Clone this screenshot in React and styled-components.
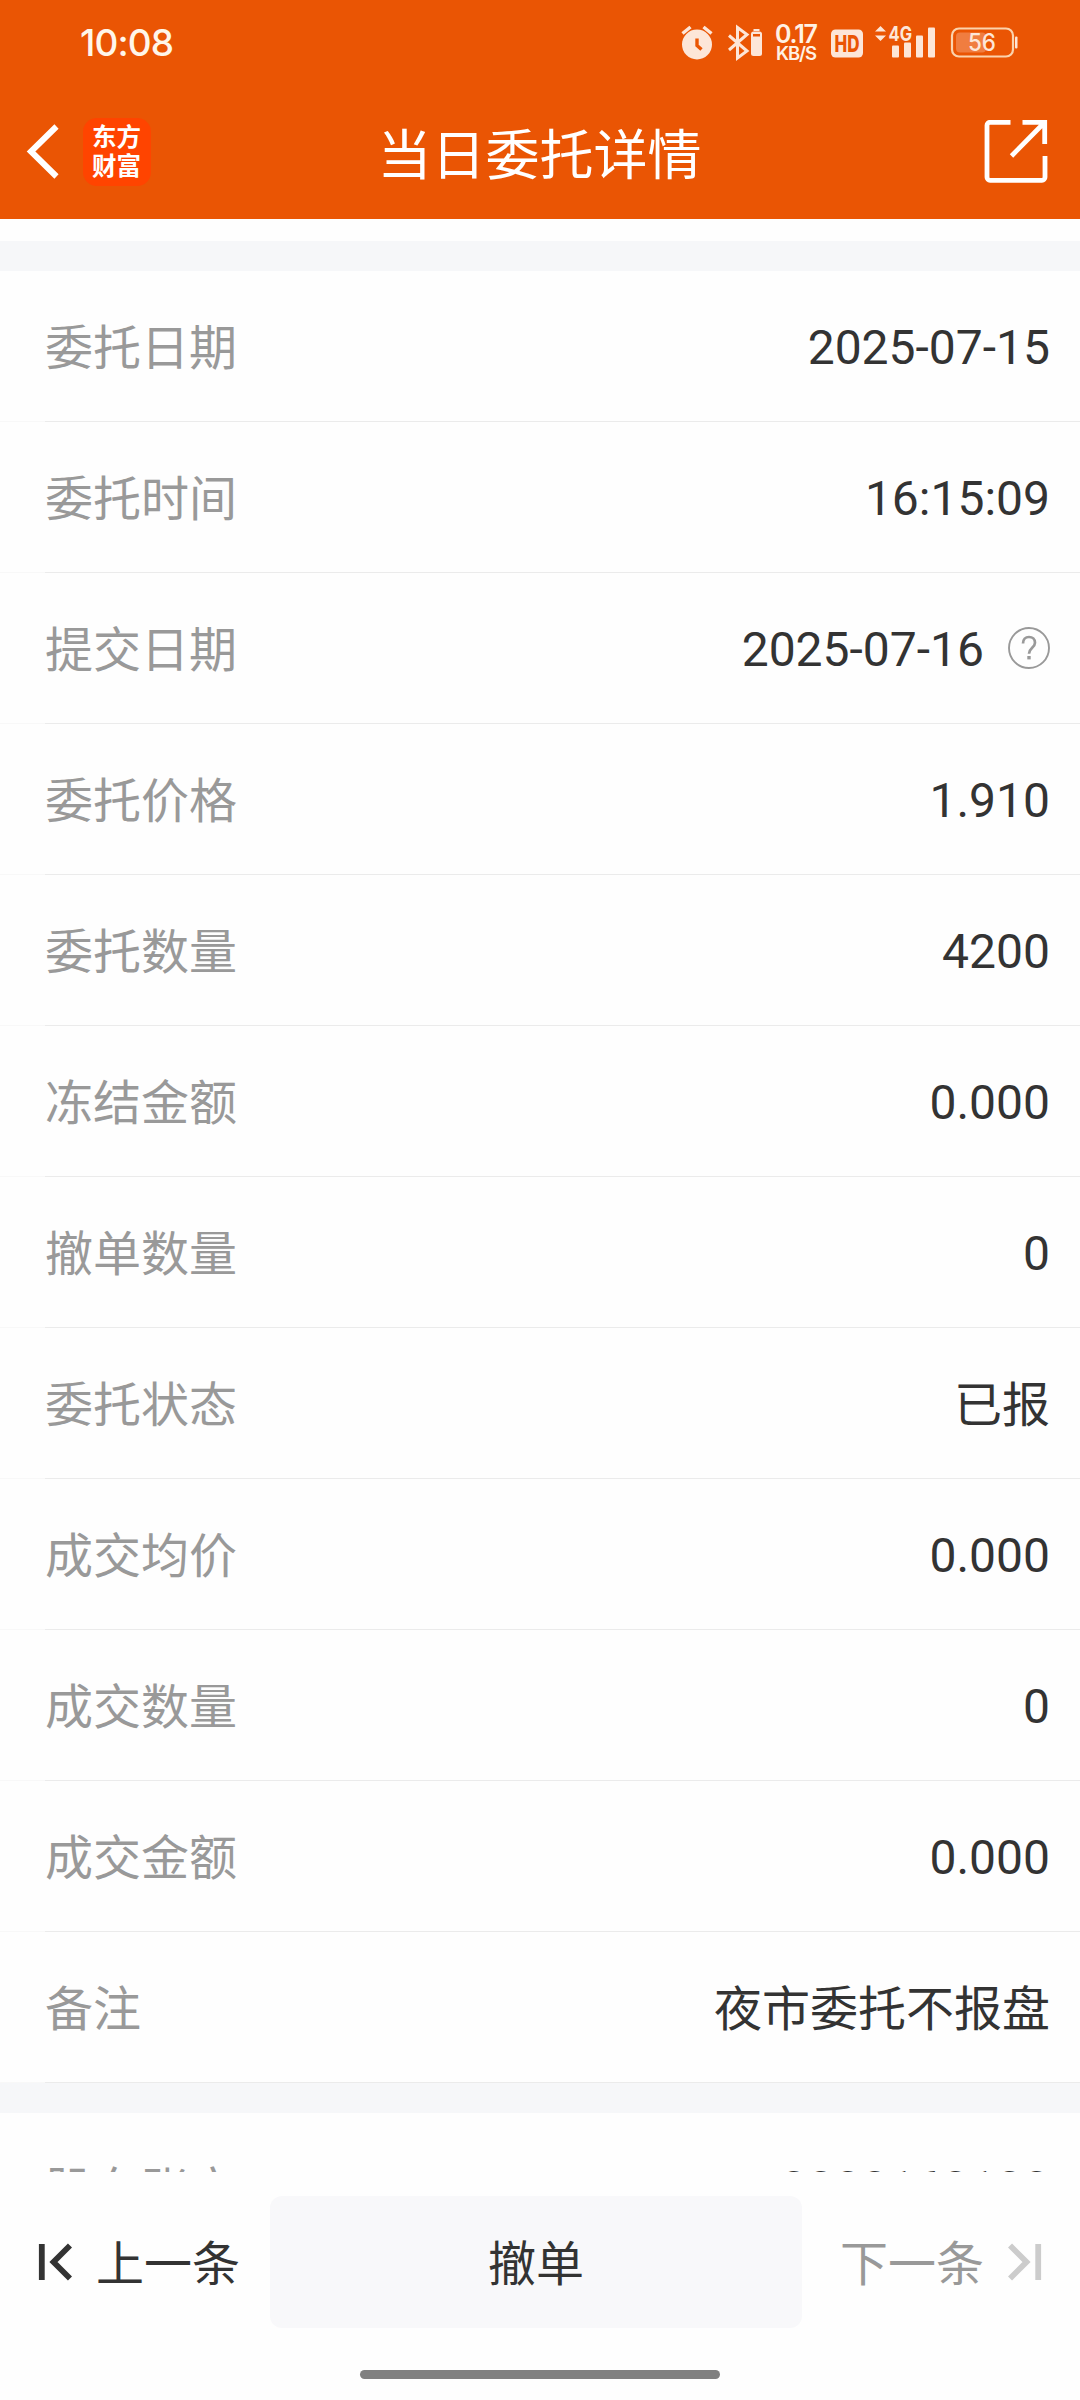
import styled, { createGlobalStyle } from "styled-components";

const GlobalStyle = createGlobalStyle`
  * {
    box-sizing: border-box;
  }
  body {
    margin: 0;
    background-color: #fff;
    font-family: Roboto, "Noto Sans CJK SC", sans-serif;
  }
`;

const Container = styled.div`
  width: 1080px;
  height: 2400px;
  display: flex;
  flex-direction: column;
  overflow: hidden;
  background-color: #fefefe;
`;

const Top = styled.header`
  height: 219px;
  flex-shrink: 0;
  background-color: #ea5504;
  color: #fff;
`;

const StatusBar = styled.div`
  height: 85px;
  display: flex;
  align-items: center;
  justify-content: space-between;
  padding: 0 62px 0 80px;
`;

const Clock = styled.span`
  font-family: Inter, sans-serif;
  font-size: 37px;
  font-weight: 500;
  letter-spacing: -0.9px;
  color: #fff6ea;
`;

const StatusIcons = styled.svg`
  width: 340px;
  height: 60px;
  font-family: Inter, sans-serif;
`;

const NavBar = styled.div`
  height: 134px;
  display: grid;
  grid-template-columns: 1fr auto 1fr;
  align-items: center;
  padding: 0 32px 0 26px;
`;

const NavLeft = styled.div`
  display: flex;
  align-items: center;
  gap: 23px;
`;

const Logo = styled.div`
  width: 68px;
  height: 68px;
  display: flex;
  flex-direction: column;
  border-radius: 14px;
  padding: 3px 0 0 9px;
  background-color: #ff4400;
  font-family: "Noto Sans CJK SC", sans-serif;
  font-size: 24.5px;
  font-weight: 700;
  line-height: 29px;
`;

const Title = styled.h1`
  margin: 10px 0 0 5px;
  font-size: 54px;
  font-weight: 400;
  line-height: 70px;
`;

const NavRight = styled.div`
  display: flex;
  justify-content: flex-end;
`;

const Content = styled.main`
  height: 1953px;
  flex-shrink: 0;
  padding-top: 22px;
  overflow: hidden;
`;

const Gap = styled.div`
  height: 30px;
  background-color: #f6f7f9;
`;

const Row = styled.div`
  height: 151px;
  display: flex;
  align-items: center;
  justify-content: space-between;
  padding: 0 30px 0 45px;
  background: linear-gradient(to right, #f8f8f8 45px, #ebebeb 45px) bottom / 100% 1px no-repeat;
  font-size: 48px;
  line-height: 70px;
`;

const Label = styled.span`
  padding-top: 5px;
  color: #999;
`;

const Value = styled.span`
  display: flex;
  align-items: center;
  gap: 24px;
  padding-top: ${({ $offset = 3 }) => $offset}px;
  color: #333;

  svg {
    margin-bottom: 4px;
  }
`;

const Footer = styled.footer`
  height: 228px;
  display: flex;
  flex-direction: column;
  align-items: center;
  padding-top: 24px;
`;

const Actions = styled.div`
  width: 100%;
  height: 132px;
  display: grid;
  grid-template-columns: 270px 532px 278px;
`;

const PageButton = styled.button`
  display: flex;
  align-items: center;
  justify-content: ${({ $next }) => ($next ? "flex-end" : "flex-start")};
  gap: 24px;
  padding: ${({ $next }) => ($next ? "0 38px 0 0" : "0 0 0 38px")};
  border: none;
  background: none;
  font: inherit;
  font-size: 48px;
  line-height: 70px;
  white-space: nowrap;
  color: ${({ $next }) => ($next ? "#999" : "#333")};
`;

const PageText = styled.span`
  padding-top: 5px;
`;

const CancelButton = styled.button`
  border: none;
  border-radius: 12px;
  padding-top: 6px;
  background-color: #f8f8fa;
  font: inherit;
  font-size: 48px;
  line-height: 70px;
  color: #333;
`;

const HomeIndicator = styled.div`
  width: 360px;
  height: 9px;
  margin-top: 42px;
  border-radius: 5px;
  background-color: #808080;
`;

const rows = [
  { label: "委托日期", value: "2025-07-15" },
  { label: "委托时间", value: "16:15:09" },
  { label: "提交日期", value: "2025-07-16", help: true },
  { label: "委托价格", value: "1.910" },
  { label: "委托数量", value: "4200" },
  { label: "冻结金额", value: "0.000" },
  { label: "撤单数量", value: "0" },
  { label: "委托状态", value: "已报", offset: 5 },
  { label: "成交均价", value: "0.000" },
  { label: "成交数量", value: "0" },
  { label: "成交金额", value: "0.000" },
  { label: "备注", value: "夜市委托不报盘", offset: 5 },
];

const StatusGlyphs = () => (
  <StatusIcons viewBox="678 12.5 340 60" fill="#fde6d8">
    {/* alarm */}
    <circle cx="697" cy="44" r="15" />
    <path d="M682.5 33l8-6.5M711.5 33l-8-6.5" stroke="#fde6d8" strokeWidth="3.4" />
    <path d="M697 38v7l4.5 4" fill="none" stroke="#ea5504" strokeWidth="3.4" />
    {/* bluetooth and its battery */}
    <path
      d="M729 35l18 15.5-9.5 7V27l9.5 7-18 15.5"
      fill="none"
      stroke="#fde6d8"
      strokeWidth="3"
    />
    <rect x="753.5" y="28.5" width="6" height="2" />
    <rect x="751" y="31" width="11" height="24.5" rx="2.5" />
    <rect x="753" y="33.5" width="7" height="2.5" fill="#ea5504" />
    {/* network speed */}
    <g fill="#fff1e4" textAnchor="middle">
      <text x="796.5" y="42" fontSize="25" fontWeight="600" textLength="43">
        0.17
      </text>
      <text x="796.5" y="59.5" fontSize="18.5" fontWeight="600" textLength="41">
        KB/S
      </text>
    </g>
    {/* hd */}
    <rect x="831" y="29" width="32" height="28" rx="4.5" />
    <text x="847" y="51.3" textAnchor="middle" fontSize="23" fontWeight="800" fill="#ea5504" textLength="25" lengthAdjust="spacingAndGlyphs">
      HD
    </text>
    {/* signal */}
    <path d="M875 31l5.5-5.5 5.5 5.5zM875 35l5.5 5.5 5.5-5.5z" />
    <text x="888.5" y="40.5" fontSize="20" fontWeight="700" textLength="23.5" lengthAdjust="spacingAndGlyphs">
      4G
    </text>
    <rect x="892" y="45" width="7" height="12" rx="1" />
    <rect x="904" y="42" width="7" height="15" rx="1" />
    <rect x="916" y="35" width="7" height="22" rx="1" />
    <rect x="928" y="27" width="7" height="30" rx="1" />
    {/* battery */}
    <rect x="952" y="28" width="61" height="28" rx="7" fill="none" stroke="#fbd3ad" strokeWidth="2.2" />
    <rect x="956" y="32" width="30" height="20" rx="4" fill="#f07d40" />
    <rect x="1015" y="36" width="2.5" height="12" rx="1" />
    <text x="982" y="50.8" textAnchor="middle" fontSize="24" fontWeight="500" textLength="28" lengthAdjust="spacingAndGlyphs">
      56
    </text>
  </StatusIcons>
);

const BackIcon = () => (
  <svg width="34" height="56" viewBox="0 0 34 56" fill="none" stroke="#fff" strokeWidth="6">
    <path d="M30.5 2.5L5 27.5l25.5 25" />
  </svg>
);

const ShareIcon = () => (
  <svg width="64" height="64" viewBox="0 1 64 64" fill="none" stroke="#fff" strokeWidth="4.8">
    <path d="M26.5 3.3H6a3 3 0 0 0-3 3v52a3 3 0 0 0 3 3h52a3 3 0 0 0 3-3V37" />
    <path d="M38.5 3.3H60.7V25M60 4L27.5 37" />
  </svg>
);

const HelpIcon = () => (
  <svg width="42" height="42" viewBox="0 0 42 42" fill="none" stroke="#999">
    <circle cx="21" cy="21" r="20" strokeWidth="1.9" />
    <path
      d="M15 16.5c0-4 2.5-6.5 6-6.5s6 2.3 6 5.8c0 5-6 5.2-6 11"
      strokeWidth="2.7"
    />
    <rect x="19.3" y="29" width="3.4" height="3.4" fill="#999" stroke="none" />
  </svg>
);

const EdgeIcon = ({ color, flip }) => (
  <svg
    width="34"
    height="38"
    viewBox="0 0 34 38"
    fill="none"
    stroke={color}
    strokeWidth="5.8"
    transform={flip ? "scale(-1 1)" : undefined}
  >
    <path d="M3.8 1v36M32 2.5L15.5 19 32 35.5" />
  </svg>
);

const App = () => {
  return (
    <Container>
      <GlobalStyle />
      <Top>
        <StatusBar>
          <Clock>10:08</Clock>
          <StatusGlyphs />
        </StatusBar>
        <NavBar>
          <NavLeft>
            <BackIcon />
            <Logo>
              <span>东方</span>
              <span>财富</span>
            </Logo>
          </NavLeft>
          <Title>当日委托详情</Title>
          <NavRight>
            <ShareIcon />
          </NavRight>
        </NavBar>
      </Top>
      <Content>
        <Gap />
        {rows.map(({ label, value, help, offset }) => (
          <Row key={label}>
            <Label>{label}</Label>
            <Value $offset={offset}>
              {value}
              {help && <HelpIcon />}
            </Value>
          </Row>
        ))}
        <Gap />
        <Row>
          <Label>股东账户</Label>
          <Value $offset={1}>0000160100</Value>
        </Row>
      </Content>
      <Footer>
        <Actions>
          <PageButton>
            <EdgeIcon color="#333" />
            <PageText>上一条</PageText>
          </PageButton>
          <CancelButton>撤单</CancelButton>
          <PageButton $next>
            <PageText>下一条</PageText>
            <EdgeIcon color="#ccc" flip />
          </PageButton>
        </Actions>
        <HomeIndicator />
      </Footer>
    </Container>
  );
};

export default App;
